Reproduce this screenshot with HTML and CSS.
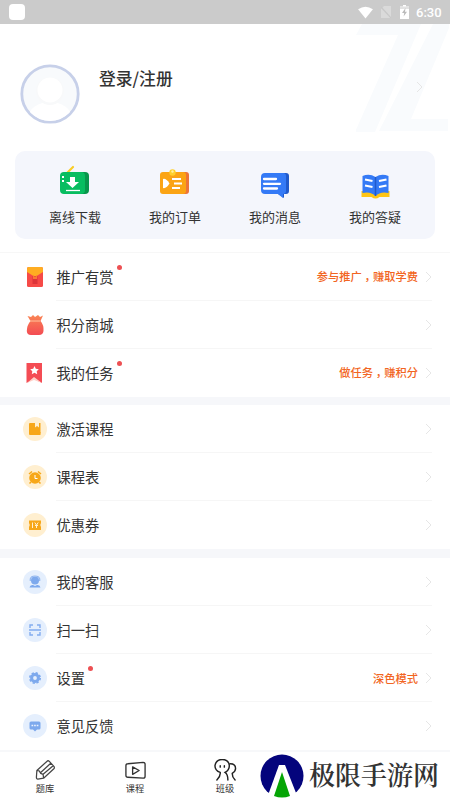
FILE: index.html
```html
<!DOCTYPE html>
<html lang="zh-CN">
<head>
<meta charset="utf-8">
<title>我的</title>
<link rel="stylesheet" href="styles.css">
</head>
<body>
<header class="status">
  <span class="app-dot"></span>
  <svg class="wifi" viewBox="0 0 18 14"><path d="M1 3.5Q9-2 17 3.5L9 13.5Z" fill="#fff"/></svg>
  <svg class="sim" viewBox="0 0 10 12"><path d="M3 0H10V12H0V3Z" fill="#dadada"/><path d="M0 1L10 12" stroke="#c8c8c8" stroke-width="1.2"/></svg>
  <svg class="battery" viewBox="0 0 9 14"><path d="M3 0H6V1.5H9V14H0V1.5H3Z" fill="#fff"/><path d="M0 1.5H9V4H0Z" fill="#e2e2e2"/><path d="M5.5 3L2 8H4.2L3.6 11.5L7 6.8H5Z" fill="#bbb"/></svg>
  <span class="time">6:30</span>
</header>

<section class="profile">
  <svg class="backdrop" viewBox="0 0 94 108"><path d="M6 0H65L19 108H-1L42 11H0ZM77 0H93V4L55 95H92V107H23Z" fill="#f9fbfd"/></svg>
  <svg class="avatar" viewBox="0 0 60 60"><defs><clipPath id="face"><circle cx="30" cy="30" r="27"/></clipPath></defs><circle cx="30" cy="30" r="28.2" fill="#f8fafc" stroke="#c7d0e9" stroke-width="2.8"/><g clip-path="url(#face)"><ellipse cx="30" cy="54" rx="22" ry="16" fill="#fff"/><circle cx="30" cy="27" r="14" fill="#f8f9fa"/><circle cx="30" cy="26" r="12.5" fill="#fff"/></g></svg>
  <h1>登录/注册</h1>
  <svg class="arrow profile-arrow" viewBox="0 0 7 12"><path d="M1 1L6 6L1 11"/></svg>
</section>

<nav class="shortcuts">
  <a class="shortcut"><svg viewBox="1 0 32 34"><path d="M9 8L15 2" stroke="#f9cc24" stroke-width="2.2" stroke-linecap="round"/><rect x="4" y="7" width="27" height="22" rx="4" fill="#08964b"/><rect x="2" y="7" width="25" height="22" rx="4" fill="#08bd60"/><path d="M4 12H6M4 16H6" stroke="#fff" stroke-width="2"/><path d="M12 12H17V17H21L14.5 23L8 17H12Z" fill="#fff"/><path d="M8 25.5H22" stroke="#fff" stroke-width="1.3"/></svg><span>离线下载</span></a>
  <a class="shortcut"><svg viewBox="1 0 32 34"><rect x="4" y="7" width="27" height="22" rx="3" fill="#ed7438"/><rect x="2" y="7" width="26" height="22" rx="3" fill="#fba414"/><circle cx="14.5" cy="7.5" r="3.2" fill="#ffd02b"/><circle cx="14.5" cy="6.5" r="1.2" fill="#fff1a0"/><path d="M5 14Q8 13 11.5 18.5Q8 24 5 23Z" fill="#fff"/><path d="M14 14H23M16 18.5H24M14 23H22" stroke="#fff" stroke-width="2"/></svg><span>我的订单</span></a>
  <a class="shortcut"><svg viewBox="-1 -1 32 34"><path d="M8 7H26Q29 7 29 10V25Q29 28 26 28H24V32L18 28V7Z" fill="#205acb"/><path d="M5 7H23Q26 7 26 10V25Q26 28 23 28V32L18 28H5Q1 28 1 24V11Q1 7 5 7Z" fill="#347af6"/><path d="M4 13H16M4 17.8H20M4 22.5H17" stroke="#fff" stroke-width="2.3" stroke-linecap="round"/></svg><span>我的消息</span></a>
  <a class="shortcut"><svg viewBox="-1.5 -1 32 34"><path d="M1 25H29V31H19Q15 34 11 31H1Z" fill="#ffc514"/><path d="M2 10Q9 7 15 11Q21 7 28 10V27Q20 25 15 30Q10 25 2 27Z" fill="#347af6"/><path d="M15 11V30" stroke="#205acb" stroke-width="1.5"/><path d="M4.5 13.5L12 15M4.5 19.5L12 21M18.5 15L26 13.5M18.5 21L26 19.5" stroke="#fff" stroke-width="2.2"/></svg><span>我的答疑</span></a>
</nav>

<main>
  <section class="group rewards">
    <div class="row"><svg class="icon" viewBox="0 0 26 26"><rect x="5" y="3" width="16" height="20" rx="1.5" fill="#f64a47"/><path d="M5 4.5Q5 3 6.5 3H19.5Q21 3 21 4.5V8L13 13L5 8Z" fill="#ffad22"/><path d="M10.5 12H15.5V20H10.5Z" fill="#dd3439"/><path d="M11 11L13 13L15 11V15H11Z" fill="#f97933"/></svg><div class="body"><span class="label">推广有赏<i class="dot"></i></span><span class="hint">参与推广<span class="comma" lang="zh-TW">，</span>赚取学费</span><svg class="arrow" viewBox="0 0 7 12"><path d="M1 1L6 6L1 11"/></svg></div></div>
    <div class="row"><svg class="icon" viewBox="0 0 26 26"><defs><linearGradient id="bag" x2="0" y2="1"><stop stop-color="#fa8554"/><stop offset="1" stop-color="#f34b53"/></linearGradient></defs><path d="M5.5 4L9 5L11 3L13 5L16 3L18 5L21 3.5L18.5 9Q22 13 21.5 19Q21 23 17 23H9Q5 23 4.8 19Q5 13 8.5 9Z" fill="url(#bag)"/><path d="M8 9H18" stroke="#ffc19b"/></svg><div class="body"><span class="label">积分商城</span><svg class="arrow" viewBox="0 0 7 12"><path d="M1 1L6 6L1 11"/></svg></div></div>
    <div class="row"><svg class="icon" viewBox="0 0 26 26"><path d="M4.5 3H20V23L12 19L4.5 23Z" fill="#f44c54"/><path d="M5 23L12 17L20 23L12 20Z" fill="#ffd2ca"/><path d="M12.5 6L13.8 8.8L16.8 9.2L14.7 11.3L15.2 14.2L12.5 12.8L9.8 14.2L10.3 11.3L8.2 9.2L11.2 8.8Z" fill="#fff"/></svg><div class="body"><span class="label">我的任务<i class="dot"></i></span><span class="hint">做任务<span class="comma" lang="zh-TW">，</span>赚积分</span><svg class="arrow" viewBox="0 0 7 12"><path d="M1 1L6 6L1 11"/></svg></div></div>
  </section>
  <section class="group courses">
    <div class="row"><svg class="icon" viewBox="0 0 26 26"><circle cx="13" cy="13" r="12" fill="#ffefd0"/><path d="M7.5 7H9V16H18.5V19H8Q7 19 7 18V8Z" fill="#f7a719"/><path d="M8 7H13V11.5L15 10L17 11.5V7H18.5V17.5H8Z" fill="#f7a719"/></svg><div class="body"><span class="label">激活课程</span><svg class="arrow" viewBox="0 0 7 12"><path d="M1 1L6 6L1 11"/></svg></div></div>
    <div class="row"><svg class="icon" viewBox="0 0 26 26"><circle cx="13" cy="13" r="12" fill="#ffefd0"/><circle cx="13" cy="14" r="5.8" fill="#f7a719"/><path d="M7 10L10 7.5M16 7.5L19 10M9 18L7.5 19.5M17 18L18.5 19.5" stroke="#f7a719" stroke-width="1.5"/><path d="M13 11V14.5H15.5" fill="none" stroke="#fff"/></svg><div class="body"><span class="label">课程表</span><svg class="arrow" viewBox="0 0 7 12"><path d="M1 1L6 6L1 11"/></svg></div></div>
    <div class="row"><svg class="icon" viewBox="0 0 26 26"><circle cx="13" cy="13" r="12" fill="#ffefd0"/><path d="M7 8.5H19V11Q17.5 13 19 15V18H7V15Q8.5 13 7 11Z" fill="#f7a719"/><path d="M10.5 10.5V16M12.8 10.5L14.5 13L16.2 10.5M14.5 13V16M13 13.5H16" stroke="#fff1d5" stroke-width="1" fill="none"/></svg><div class="body"><span class="label">优惠券</span><svg class="arrow" viewBox="0 0 7 12"><path d="M1 1L6 6L1 11"/></svg></div></div>
  </section>
  <section class="group tools">
    <div class="row"><svg class="icon" viewBox="0 0 26 26"><circle cx="13" cy="13" r="12" fill="#e5effd"/><circle cx="13" cy="11.5" r="4" fill="#7da9ed"/><path d="M8.3 12V10Q9 7 13 7Q17 7 17.7 10V12" fill="none" stroke="#94b8f0" stroke-width="1.2"/><path d="M7.5 18.5Q8 15.5 11 16L13 17L15 16Q18 15.5 18.5 18.5Z" fill="#7da9ed"/></svg><div class="body"><span class="label">我的客服</span><svg class="arrow" viewBox="0 0 7 12"><path d="M1 1L6 6L1 11"/></svg></div></div>
    <div class="row"><svg class="icon" viewBox="0 0 26 26"><circle cx="13" cy="13" r="12" fill="#e5effd"/><path d="M8 11V8H11M15 8H18V11M8 15V18H11M15 18H18V15M7 13H19" fill="none" stroke="#83adef" stroke-width="1.4"/></svg><div class="body"><span class="label">扫一扫</span><svg class="arrow" viewBox="0 0 7 12"><path d="M1 1L6 6L1 11"/></svg></div></div>
    <div class="row"><svg class="icon" viewBox="0 0 26 26"><circle cx="13" cy="13" r="12" fill="#e5effd"/><circle cx="13" cy="13" r="3.4" fill="none" stroke="#7da9ed" stroke-width="3"/><circle cx="13" cy="13" r="5.2" fill="none" stroke="#7da9ed" stroke-width="1.6" stroke-dasharray="2.3 1.784"/></svg><div class="body"><span class="label">设置<i class="dot"></i></span><span class="hint">深色模式</span><svg class="arrow" viewBox="0 0 7 12"><path d="M1 1L6 6L1 11"/></svg></div></div>
    <div class="row"><svg class="icon" viewBox="0 0 26 26"><circle cx="13" cy="13" r="12" fill="#e5effd"/><path d="M9 8.5H17Q18.5 8.5 18.5 10V15Q18.5 16.5 17 16.5H15L13 18.5L11 16.5H9Q7.5 16.5 7.5 15V10Q7.5 8.5 9 8.5Z" fill="#7da9ed"/><path d="M9.5 12.5H16.5" stroke="#eaf2ff" stroke-width="1.3" stroke-dasharray="1.7 .9"/></svg><div class="body"><span class="label">意见反馈</span><svg class="arrow" viewBox="0 0 7 12"><path d="M1 1L6 6L1 11"/></svg></div></div>
  </section>
</main>

<footer class="tabs">
  <a class="tab"><svg viewBox="0 0 24 24"><path d="M3 12L14 2Q15 1.5 16 2.5L21 8Q21.5 9 21 10L10 20L4 21Q2.5 21 2.5 19ZM3 12L5.5 12.5L7 15L9.5 16L10 20M7 14L17.5 4.5M9.5 16L20 7" fill="none" stroke="#454545" stroke-width="1.3" stroke-linejoin="round"/></svg><span>题库</span></a>
  <a class="tab"><svg viewBox="0 0 24 24"><path d="M4 5L20 3.5Q22 3.5 22 5.5V18Q22 20 20 20L4 19Q2 19 2 17V7Q2 5 4 5ZM9 8.2V16L15.8 12Z" fill="none" stroke="#333" stroke-width="1.4" stroke-linejoin="round"/></svg><span>课程</span></a>
  <a class="tab"><svg viewBox="0 0 24 24"><path d="M6.5 14Q1 12 1 7Q2 .5 8.5 .5Q15.5 .5 16 7Q16 11.5 11.5 14Q14.5 16 14.5 22M6.5 14Q7 18 3 22M17 5Q22.5 5 22.5 10Q22.5 13 19 15Q19 19 22 22M6.5 7V8.5M10.8 7V8.5" fill="none" stroke="#222" stroke-width="1.5" stroke-linecap="round"/></svg><span>班级</span></a>
  <div class="brand"><svg viewBox="0 0 44 44"><circle cx="22" cy="22" r="21.5" fill="#04047c"/><path d="M19 11H25L38 44H7Z" fill="#fff"/><path d="M22 18L30 42Q22 45 14 42Z" fill="#05a505"/></svg><strong>极限手游网</strong></div>
</footer>
</body>
</html>
```
FILE: styles.css
```css
* { box-sizing: border-box; }
body { margin: 0; width: 450px; height: 800px; overflow: hidden; background: #fff; color: #333; font-family: "Noto Sans CJK SC", sans-serif; }
svg { display: block; flex: none; }
.status { height: 24px; background: #cbcbcb; display: flex; align-items: center; padding: 0 8px 0 9px; }
.app-dot { width: 16px; height: 16px; border-radius: 4px; background: #fff; margin-right: auto; }
.wifi { width: 17px; height: 13px; margin-right: 7px; }
.sim { width: 10px; height: 12px; margin-right: 9px; }
.battery { width: 9px; height: 14px; margin-right: 7px; }
.time { font: 500 13px/25px Roboto, sans-serif; color: #fff; width: 26px; white-space: nowrap; }
.profile { position: relative; height: 127px; display: flex; padding: 40px 27px 0 20px; }
.backdrop { position: absolute; right: 0; top: 0; width: 94px; height: 108px; }
.avatar { position: relative; width: 60px; height: 60px; }
.profile h1 { position: relative; margin: 2px auto 0 19px; font-size: 16.8px; line-height: 24px; font-weight: 500; }
.arrow { width: 7px; height: 12px; fill: none; stroke: #e6e6e6; stroke-width: 1; }
.profile-arrow { position: relative; margin-top: 17px; }
.shortcuts { height: 88px; margin: 0 15px; padding: 0 10px; border-radius: 10px; background: #f4f6fc; display: grid; grid-template-columns: repeat(4, 1fr); }
.shortcut { display: flex; flex-direction: column; align-items: center; padding-top: 14px; }
.shortcut svg { width: 32px; height: 34px; }
.shortcut span { font-size: 13px; line-height: 20px; margin-top: 8px; }
main { margin-top: 13px; background: #f6f7fa; }
.group { background: #fff; }
.rewards { border-top: 1px solid #f7f7f7; height: 145px; }
.courses { margin-top: 8px; }
.tools { margin-top: 9px; }
.row { height: 48px; padding-left: 22px; padding-right: 18px; display: flex; align-items: center; }
.icon { width: 26px; height: 26px; margin-right: 8px; }
.body { flex: 1; height: 48px; display: flex; align-items: center; border-bottom: 1px solid #f6f6f6; }
.row:last-child .body { border-bottom-color: transparent; }
.label { position: relative; font-size: 14.25px; line-height: 22px; margin-right: auto; padding-left: .5px; }
.courses .label { padding-top: 1px; }
.dot { position: absolute; right: -8px; top: -1px; width: 5px; height: 5px; border-radius: 50%; background: #ed5053; }
.hint { color: #f26522; font-size: 11.25px; line-height: 18px; font-weight: 500; margin-right: 7px; }
.comma { font-family: "Noto Sans CJK TC", sans-serif; line-height: 1; vertical-align: -3px; }
.tabs { height: 50px; background: #fff; border-top: 2px solid #f7f8fa; display: flex; position: relative; }
.tab { width: 90px; display: flex; flex-direction: column; align-items: center; padding-top: 7px; }
.tab svg { width: 23px; height: 23px; }
.tab span { font-size: 9.25px; line-height: 12px; }
.brand { position: absolute; left: 250px; right: 0; top: 0; bottom: 0; background: #fff; display: flex; align-items: center; padding-left: 10px; }
.brand svg { width: 44px; height: 44px; }
.brand strong { font-family: "Noto Serif CJK SC", "Noto Sans CJK SC", serif; font-size: 26px; line-height: 36px; font-weight: 600; margin: -4px 0 0 5px; color: #333; white-space: nowrap; }
```
